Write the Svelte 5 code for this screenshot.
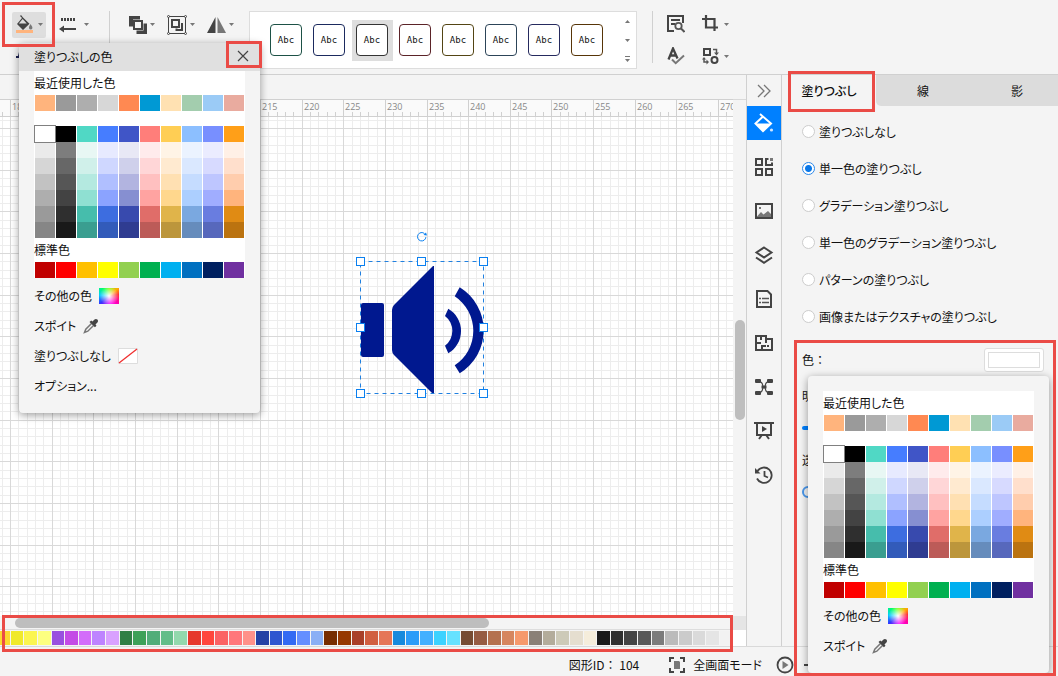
<script lang="ts">
  let fillType = $state('solid');
  let selectedStyle = $state(2);
  let brightness = $state(50);
  let opacity = $state(0);
  let canvasWidth = $state(733);
  let canvasHeight = $state(500);

  const recent = ['#ffb47d', '#9a9a9a', '#aeaeae', '#d7d7d7', '#ff8952', '#0099d4', '#ffe1b2', '#a3cdae', '#9bcbf6', '#e9ab9f'];

  const theme = [
    ['#ffffff', '#000000', '#50d8c5', '#467dff', '#4055c7', '#ff7e7a', '#ffce54', '#8cbfff', '#788fff', '#ff9f18'],
    ['#eaeaea', '#7d7d7d', '#e8f7f4', '#e7eaff', '#e8e8f5', '#ffebec', '#fff4e6', '#ebf3ff', '#ebecff', '#fff0e6'],
    ['#d6d6d6', '#676767', '#d0f0ea', '#cfd7ff', '#cfd0eb', '#ffd6d7', '#ffead0', '#dae8ff', '#d7daff', '#ffdfcc'],
    ['#c2c2c2', '#565656', '#b4e9e0', '#b0bfff', '#b2b4e0', '#ffc0c0', '#ffe0b2', '#c5dcff', '#bec6ff', '#ffcdad'],
    ['#aeaeae', '#434343', '#8fe0d2', '#8ba3ff', '#868fd1', '#ffa3a1', '#ffd78d', '#accfff', '#a0adff', '#ffb47d'],
    ['#9a9a9a', '#2f2f2f', '#46bdac', '#3d6de0', '#384aae', '#e06d69', '#e0b44a', '#7aa8e0', '#697de0', '#e08b14'],
    ['#868686', '#191919', '#3a9e90', '#325bba', '#2f3c91', '#bc5b58', '#bc963c', '#668cbc', '#5768bc', '#bb7310'],
  ];

  const standard = ['#c00000', '#ff0000', '#ffc000', '#ffff00', '#92d050', '#00b050', '#00b0f0', '#0070c0', '#002060', '#7030a0'];

  const strip = [
    '#fcd92f', '#f0e92c', '#fbf550', '#fdff80', '#9950df', '#c44ce6', '#d36dfa', '#be84ff', '#d9a1ff',
    '#307f45', '#3da158', '#51ad79', '#63bd89', '#93d8ad', '#e6382c', '#ff473c', '#fb6364', '#ff777b',
    '#ff9189', '#2542a5', '#2e56d0', '#336af3', '#648fff', '#8aaff5', '#772d00', '#963800', '#a93f28',
    '#d15f40', '#e57657', '#178add', '#2c9cf8', '#43b0ff', '#3dd2ff', '#66e2ff', '#774c33', '#965c43',
    '#b4714f', '#d6865f', '#f6996c', '#8a8077', '#b3ac9b', '#cdcab8', '#e5decf', '#f5eddb', '#1a1a1a',
    '#303030', '#444444', '#595959', '#7c7c7c', '#bbbbbb', '#cbcbcb', '#dadada', '#e5e5e5', '#f2f2f2',
  ];

  const styles = ['#1d5146', '#1b2a5e', '#333333', '#5b2328', '#544514', '#2c4458', '#252a5e', '#573508'];

  const fillTypes = [
    { id: 'none', label: '塗りつぶしなし' },
    { id: 'solid', label: '単一色の塗りつぶし' },
    { id: 'gradient', label: 'グラデーション塗りつぶし' },
    { id: 'solid-gradient', label: '単一色のグラデーション塗りつぶし' },
    { id: 'pattern', label: 'パターンの塗りつぶし' },
    { id: 'picture', label: '画像またはテクスチャの塗りつぶし' },
  ];

  // five small units make one large unit
  const unit = 8.33;

  function lines(start: number, size: number) {
    return Array.from({ length: Math.ceil((size - start) / unit) + 1 }, (_, i) => ({
      at: Math.round(start + (i - 1) * unit),
      major: (i - 1) % 5 === 0,
      value: 184 + i,
    }));
  }

  let vertical = $derived(lines(10, canvasWidth));
  let horizontal = $derived(lines(11, canvasHeight));

  const handles = [[360, 144], [421, 144], [483, 144], [360, 210], [483, 210], [360, 276], [421, 276], [483, 276]];
</script>

{#snippet caret()}
  <svg class="caret" width="5" height="3" viewBox="0 0 5 3" aria-hidden="true"><path d="M0 0h5L2.5 3z" fill="#777" /></svg>
{/snippet}

{#snippet swatches(colors: string[])}
  {#each colors as color}
    <button class={['swatch', color === '#ffffff' && 'current']} style:background={color} aria-label={color}></button>
  {/each}
{/snippet}

{#snippet picker()}
  <div class="picker">
    <h3>最近使用した色</h3>
    <div class="colors">{@render swatches(recent)}</div>
    <div class="colors theme">{@render swatches(theme.flat())}</div>
    <h3>標準色</h3>
    <div class="colors">{@render swatches(standard)}</div>
  </div>
  <button class="option">その他の色 <span class="spectrum"></span></button>
  <button class="option">
    スポイト
    <svg width="16" height="16" viewBox="0 0 16 16" aria-hidden="true">
      <path d="M8.500 5.500 2.800 11.200 1.500 14.500 4.800 13.200l5.700-5.700" fill="none" stroke="#777" stroke-width="1.500" />
      <path d="m6.500 4 1.700-1.500 1.300 1L11.200 1.700c1-1 2.300-1 3.200-.2.900 1 .8 2.300-.2 3.200l-1.700 1.800 1 1.200-1.600 1.600z" fill="#444" />
    </svg>
  </button>
{/snippet}

<div class="app">
  <header class="toolbar">
    <div class="group">
      <div class="row">
        <div class="dropdown">
          <button class="tool open" aria-label="塗りつぶしの色" aria-expanded="true">
            <svg width="19" height="19" viewBox="0 0 19 19" aria-hidden="true">
              <path d="M6 0 5 1l2 2-5 6 6 6 6.500-6.200L8 2.500z" fill="#444" />
              <path d="M7.700 4 3.800 8.600h7.900z" fill="#dedede" />
              <path d="M15.500 9c1.400 2 2.200 3.300 1.800 4.600-.5 1.300-2.700 1.300-3.200 0-.4-1.300.2-2.600 1.400-4.600z" fill="#777" />
              <path d="M1 15h17v3H1z" fill="#ffb47d" />
            </svg>
            {@render caret()}
            <span class="callout around-tool"></span>
          </button>
          <div class="menu">
            <div class="menu-title">
              <h2>塗りつぶしの色</h2>
              <button class="close" aria-label="閉じる">
                <svg width="12" height="12" viewBox="0 0 12 12" aria-hidden="true"><path d="m1 1 10 10M11 1 1 11" stroke="#444" stroke-width="1.200" /></svg>
                <span class="callout around-close"></span>
              </button>
            </div>
            <div class="menu-body">
              {@render picker()}
              <button class="option">
                塗りつぶしなし
                <svg width="20" height="16" viewBox="0 0 20 16" aria-hidden="true">
                  <path d="M.5.500h19v15H.500z" fill="#fff" stroke="#ddd" />
                  <path d="M1 15 19 1" stroke="#f03030" stroke-width="1.300" />
                </svg>
              </button>
              <button class="option">オプション...</button>
            </div>
          </div>
        </div>
        <button class="tool line" aria-label="線のスタイル">
          <svg width="18" height="16" viewBox="0 0 18 16" aria-hidden="true">
            <path d="M2 2.500h15" stroke="#444" stroke-width="3" stroke-dasharray="2 1" />
            <path d="M3 12h14" stroke="#444" stroke-width="2" />
            <path d="M0 12 5 8.500v7z" fill="#444" />
          </svg>
          {@render caret()}
        </button>
      </div>
      <div class="row">
        <button class="tool font-color" aria-label="文字の色">
          <svg width="8" height="8" viewBox="0 0 8 8" aria-hidden="true"><path d="M3 0h5v3H5v3H0V4h2z" fill="#1b2050" /></svg>
        </button>
      </div>
    </div>
    <span class="separator"></span>
    <div class="row arrange">
      <button class="tool" aria-label="前面へ移動">
        <svg width="18" height="18" viewBox="0 0 18 18" aria-hidden="true">
          <path d="M0 0h11v3.500H4v7H0zM14.500 7.500H18V18H7.500v-3.500h7z" fill="#444" />
          <path d="M5 5h8v8H5z" fill="#f4f4f4" stroke="#444" stroke-width="2" />
        </svg>
        {@render caret()}
      </button>
      <button class="tool" aria-label="グループ化">
        <svg width="20" height="20" viewBox="0 0 20 20" aria-hidden="true">
          <path d="M1.500 1.500h17v17h-17z" fill="none" stroke="#444" />
          <g fill="#f4f4f4" stroke="#444"><circle cx="1.500" cy="1.500" r="1" /><circle cx="18.500" cy="1.500" r="1" /><circle cx="1.500" cy="18.500" r="1" /><circle cx="18.500" cy="18.500" r="1" /></g>
          <path d="M5 5h7v7H5zM15 8v7H9.500v-1.500" fill="none" stroke="#444" stroke-width="2" />
        </svg>
        {@render caret()}
      </button>
      <button class="tool" aria-label="反転">
        <svg width="19" height="18" viewBox="0 0 19 18" aria-hidden="true"><path d="M8.500 1v16H0z" fill="#444" /><path d="M10.500 1v16H19z" fill="#777" /></svg>
        {@render caret()}
      </button>
    </div>
    <div class="gallery">
      {#each styles as color, i}
        <button class={['preset', selectedStyle === i && 'selected']} onclick={() => (selectedStyle = i)}>
          <span style:border-color={color}>Abc</span>
        </button>
      {/each}
      <div class="gallery-scroll">
        <button aria-label="上へ"><svg width="5" height="3" viewBox="0 0 5 3"><path d="M0 3h5L2.500 0z" fill="#777" /></svg></button>
        <button aria-label="下へ">{@render caret()}</button>
        <button aria-label="すべて表示"><svg width="5" height="6" viewBox="0 0 5 6"><path d="M0 .5h5" stroke="#777" /><path d="M0 3h5L2.500 6z" fill="#777" /></svg></button>
      </div>
    </div>
    <span class="separator"></span>
    <div class="tools">
      <button class="tool" aria-label="検索">
        <svg width="18" height="18" viewBox="0 0 18 18" aria-hidden="true">
          <path d="M7 16H1V1h15v7M4 5h9M4 9h4" fill="none" stroke="#444" stroke-width="2" />
          <circle cx="11.500" cy="11" r="3.200" fill="none" stroke="#555" stroke-width="1.800" /><path d="m14 13.500 3.500 3.500" stroke="#555" stroke-width="2" />
        </svg>
      </button>
      <button class="tool" aria-label="トリミング">
        <svg width="18" height="18" viewBox="0 0 18 18" aria-hidden="true"><path d="M4 0v12.500h12M0 4h12.500v12" fill="none" stroke="#444" stroke-width="2.200" /></svg>
        {@render caret()}
      </button>
      <button class="tool" aria-label="スペルチェック">
        <svg width="18" height="18" viewBox="0 0 18 18" aria-hidden="true">
          <path d="M1.500 12.500 6 1.500l4.500 10M3.500 8.500h5" fill="none" stroke="#444" stroke-width="2.300" />
          <path d="m5 12.500 3.700 3.700L17 8.500" fill="none" stroke="#777" stroke-width="2" />
        </svg>
      </button>
      <button class="tool" aria-label="図形の置換">
        <svg width="18" height="18" viewBox="0 0 18 18" aria-hidden="true">
          <path d="M2 2h6v6H2z" fill="none" stroke="#444" stroke-width="2" />
          <circle cx="12.500" cy="13" r="3" fill="none" stroke="#444" stroke-width="2" />
          <path d="M11 2.500h3.500V6M2 11.500V15h3.500" fill="none" stroke="#555" stroke-width="1.500" />
          <path d="M12 5.500h5l-2.500 3zM4.500 12.500v5l2.500-2.500zM0 12.500h4L2 10z" fill="#555" />
        </svg>
        {@render caret()}
      </button>
    </div>
  </header>

  <main>
    <section class="workspace">
      <div class="pages"></div>
      <svg class="ruler" aria-hidden="true">
        {#each vertical as tick}
          <rect x={tick.at} y={tick.major ? 0 : 12} width="1" height="18" fill="#d0d0d0" />
          {#if tick.major}<text x={tick.at + 2} y="10">{tick.value}</text>{/if}
        {/each}
      </svg>
      <div class="ruler-end"></div>
      <div class="canvas" bind:clientWidth={canvasWidth} bind:clientHeight={canvasHeight}>
        <svg width="100%" height="100%">
          {#each vertical.filter((l) => !l.major) as line}<rect x={line.at} y="0" width="1" height="100%" fill="#ededed" />{/each}
          {#each horizontal.filter((l) => !l.major) as line}<rect x="0" y={line.at} width="100%" height="1" fill="#ededed" />{/each}
          {#each vertical.filter((l) => l.major) as line}<rect x={line.at} y="0" width="1" height="100%" fill="#d9d9d9" />{/each}
          {#each horizontal.filter((l) => l.major) as line}<rect x="0" y={line.at} width="100%" height="1" fill="#d9d9d9" />{/each}

          <g fill="#00188f">
            <rect x="361" y="186" width="23" height="54" rx="2" />
            <path d="M433 149h1v128h-1L394 238q-2-2-2-5v-40q0-3 2-5z" />
            <path d="M448.300 191.700a25.900 25.900 0 0 1 0 44.600L445 228.700a18.700 18.700 0 0 0 0-29.700z" />
            <path d="M459.700 170.300a50.500 50.500 0 0 1 0 86L454.700 248.300a41.300 41.300 0 0 0 0-69z" />
          </g>
          <g fill="none" stroke="#0a80f0">
            <rect x="360.500" y="144.500" width="123" height="132" stroke="#2080e0" stroke-dasharray="4 4" />
            <path d="M424.500 116.600a4.200 4.200 0 1 0 1.400 3.500" />
            <path d="m423.500 118 3.500.5-1-3z" fill="#0a80f0" stroke="none" />
            {#each handles as [x, y]}<rect x={x - 3.5} y={y - 3.5} width="8" height="8" fill="#fff" />{/each}
          </g>
        </svg>
      </div>
      <div class="scroll-y"><span></span></div>
      <div class="scroll-x"><span></span></div>
      <div class="corner"></div>
      <div class="strip">
        {#each strip as color}<button style:background={color} aria-label={color}></button>{/each}
      </div>
      <div class="strip-end"></div>
      <span class="callout around-strip"></span>
    </section>

    <nav class="rail">
      <button class="collapse" aria-label="折りたたむ"><svg width="14" height="14" viewBox="0 0 14 14"><path d="m1 1 6 6-6 6M7 1l6 6-6 6" fill="none" stroke="#777" stroke-width="1.300" /></svg></button>
      <button class="active" aria-label="塗りつぶし">
        <svg width="20" height="20" viewBox="0 0 20 20"><path d="m6 1 11 9.500-8 7.500-7.500-7.500L9 3.500" fill="none" stroke="#fff" stroke-width="2" /><path d="M2 10.500h14.500L9 18z" fill="#fff" /><circle cx="17.500" cy="17" r="1.600" fill="#cfe5ff" /></svg>
      </button>
      <button aria-label="図形"><svg width="18" height="18" viewBox="0 0 18 18"><path d="M1 1h6v6H1zM1 11h6v6H1zM11 11h6v6h-6zM13.500 1H11v6h6V4.500" fill="none" stroke="#444" stroke-width="2" /><path d="M15 0h3v3h-3z" fill="#777" /></svg></button>
      <button aria-label="画像"><svg width="18" height="16" viewBox="0 0 18 16"><path d="M1 1h16v14H1z" fill="none" stroke="#444" stroke-width="2" /><path d="M2 13.500 6 9l2.500 2.500L13 8l3 3v3H2z" fill="#777" /><path d="M4 4h2v2H4z" fill="#777" /></svg></button>
      <button aria-label="レイヤー"><svg width="20" height="18" viewBox="0 0 20 18"><path d="m10 1.500 7.500 5L10 11.500l-7.500-5z" fill="none" stroke="#444" stroke-width="2" /><path d="m2 11.500 8 5.300 8-5.300" fill="none" stroke="#444" stroke-width="2" /></svg></button>
      <button aria-label="ページ"><svg width="18" height="18" viewBox="0 0 18 18"><path d="M2 1h10.500L16 4.500V17H2z" fill="none" stroke="#444" stroke-width="2" /><path d="M7 8.500h7M7 12.500h7M4 8.500h2M4 12.500h2" stroke="#555" stroke-width="1.500" /></svg></button>
      <button aria-label="間取り"><svg width="18" height="16" viewBox="0 0 18 16"><path d="M1 1h10v3h6v11H1zM1 8h5M7 15v-4h4M11 4v4M6 1v4M12 11h2" fill="none" stroke="#444" stroke-width="2" /></svg></button>
      <button aria-label="マインドマップ"><svg width="18" height="16" viewBox="0 0 18 16"><path d="M4 2.500q3 0 3.500 3t1.500 2.500q1 .5 1.500-2.500t3.500-3M4 13.500q3 0 3.500-3T9 8q1-.5 1.500 2.500t3.500 3" fill="none" stroke="#444" stroke-width="1.200" /><path d="M6.500 6.500h5v3h-5z" fill="#444" /><rect width="6" height="4" rx="1" fill="#444" /><rect x="12" width="6" height="4" rx="1" fill="#444" /><rect y="12" width="6" height="4" rx="1" fill="#444" /><rect x="12" y="12" width="6" height="4" rx="1" fill="#444" /></svg></button>
      <button aria-label="プレゼンテーション"><svg width="20" height="18" viewBox="0 0 20 18"><path d="M0 1h20M3 1v12h14V1M7.500 13.500 5 17M12.500 13.500 15 17" fill="none" stroke="#444" stroke-width="2" /><path d="M8 4v6l5-3z" fill="#444" /></svg></button>
      <button aria-label="履歴"><svg width="18" height="18" viewBox="0 0 18 18"><path d="M2.500 5A7.700 7.700 0 1 1 2 12.500M9.500 5v5l3.500 1.500" fill="none" stroke="#444" stroke-width="1.800" /><path d="M0 2v5.500h5.500z" fill="#444" /></svg></button>
    </nav>

    <aside class="panel">
      <div class="tabs" role="tablist">
        <button class="tab current" role="tab" aria-selected="true">塗りつぶし<span class="callout around-tab"></span></button>
        <div class="other-tabs">
          <button class="tab" role="tab" aria-selected="false">線</button>
          <button class="tab" role="tab" aria-selected="false">影</button>
        </div>
      </div>
      <div class="fill-types">
        {#each fillTypes as type}
          <label><input type="radio" name="fill" value={type.id} bind:group={fillType} />{type.label}</label>
        {/each}
      </div>
      <div class="color-section">
        <span class="callout around-color"></span>
        <div class="color-row">
          <span class="full-width">色：</span>
          <button class="color-button" aria-label="色"><span></span></button>
        </div>
        <label class="setting" for="brightness">明度</label>
        <div class="setting"><input id="brightness" class="filled" type="range" bind:value={brightness} /></div>
        <label class="setting" for="opacity">透明度</label>
        <div class="setting"><input id="opacity" type="range" bind:value={opacity} /></div>
        <div class="popup">{@render picker()}</div>
      </div>
    </aside>
  </main>

  <footer>
    <span class="shape-id full-width">図形ID： 104</span>
    <button class="fullscreen">
      <svg width="16" height="16" viewBox="0 0 16 16" aria-hidden="true"><path d="M1 5V1h4M11 1h4v4M15 11v4h-4M5 15H1v-4" fill="none" stroke="#444" stroke-width="2" /><path d="M5 4h5l1 1v7H5z" fill="#777" /></svg>
      全画面モード
    </button>
    <button class="play" aria-label="再生"><svg width="18" height="18" viewBox="0 0 18 18"><circle cx="9" cy="9" r="7.500" fill="none" stroke="#444" stroke-width="1.800" /><path d="M6.500 5v8l6-4z" fill="#777" /></svg></button>
    <div class="zoom">
      <button aria-label="縮小"><svg width="8" height="2" viewBox="0 0 8 2"><path d="M0 0h8v2H0z" fill="#444" /></svg></button>
    </div>
  </footer>
</div>

<style>
  :global(body) {
    margin: 0;
  }

  .app {
    display: flex;
    flex-direction: column;
    height: 100vh;
    overflow: hidden;
    background: #f4f4f4;
    color: #111;
    font: 12px/16px "Noto Sans CJK JP", sans-serif;
    font-feature-settings: "palt";
  }

  .app :global(*) {
    box-sizing: border-box;
  }

  button {
    display: flex;
    align-items: center;
    justify-content: center;
    margin: 0;
    padding: 0;
    border: 0;
    background: none;
    color: inherit;
    font: inherit;
    font-feature-settings: inherit;
  }

  svg {
    display: block;
    flex: none;
  }

  h2, h3 {
    margin: 0;
    font-size: 12px;
    font-weight: 400;
  }

  .full-width {
    font-feature-settings: normal;
  }

  .callout {
    position: absolute;
    z-index: 20;
    border: 3px solid #ea4b46;
    pointer-events: none;
  }

  .around-tool { inset: -10px -9px -9px -10px; }
  .around-close { inset: -3px -4px 0 -2px; }
  .around-tab { inset: -4px 1px -6px 6px; }
  .around-strip { inset: auto 13px -6px 2px; height: 37px; }
  .around-color { inset: 0 0 auto; height: 336px; }

  .toolbar {
    display: flex;
    align-items: flex-start;
    flex: none;
    height: 75px;
    padding: 11px 0 0 12px;
    border-bottom: 1px solid #d0d0d0;
  }

  .row {
    display: flex;
    height: 27px;
    align-items: center;
  }

  .group {
    width: 97px;
  }

  .dropdown {
    position: relative;
  }

  .tool {
    position: relative;
    gap: 4px;
    height: 26px;
  }

  .open {
    width: 34px;
    border-radius: 2px;
    background: #dedede;
  }

  .line {
    gap: 7px;
    margin-left: 13px;
  }

  .font-color {
    margin: 8px 0 0 4px;
  }

  .separator {
    width: 1px;
    height: 52px;
    background: #d0d0d0;
  }

  .arrange {
    gap: 12px;
    width: 139px;
    padding-left: 19px;
  }

  .arrange .tool {
    gap: 3px;
  }

  .gallery {
    display: flex;
    align-items: center;
    gap: 2px;
    width: 388px;
    height: 58px;
    margin-right: 15px;
    padding-left: 16px;
    border: 1px solid #ddd;
    background: #fff;
  }

  .preset {
    justify-content: flex-start;
    height: 41px;
    width: 41px;
    padding-left: 4px;
  }

  .preset.selected {
    background: #dedede;
  }

  .preset span {
    width: 32px;
    height: 32px;
    border: 1px solid;
    border-radius: 4px;
    background: #fff;
    font: 9px/30px "DejaVu Sans Mono", monospace;
  }

  .gallery-scroll {
    display: flex;
    flex-direction: column;
    width: 18px;
    margin-left: auto;
  }

  .gallery-scroll button {
    height: 19px;
  }

  .tools {
    display: grid;
    grid-template-columns: 35px 24px;
    grid-auto-rows: 26px;
    gap: 6px 0;
    margin-left: 14px;
  }

  .tools .tool {
    justify-content: flex-start;
  }

  .menu, .popup {
    position: absolute;
    z-index: 10;
    width: 241px;
    border-radius: 4px;
    background: #f4f4f4;
    box-shadow: 0 2px 8px rgb(0 0 0 / 40%);
  }

  .menu {
    top: 31px;
    left: 7px;
  }

  .menu-title {
    display: flex;
    justify-content: space-between;
    height: 28px;
    padding: 1px 2px 0 15px;
    background: #e0e0e0;
  }

  .menu-title h2 {
    line-height: 26px;
  }

  .close {
    position: relative;
    width: 30px;
    height: 24px;
  }

  .menu-body {
    padding: 0 15px 12px;
  }

  .picker {
    width: 211px;
    background: #fff;
  }

  .picker h3 {
    line-height: 24px;
  }

  .colors {
    display: grid;
    grid-template-columns: repeat(10, 20px);
    grid-auto-rows: 16px;
    column-gap: 1px;
    padding: 0 1px;
  }

  .theme {
    padding-top: 15px;
  }

  .swatch.current {
    position: relative;
    outline: 1px solid #808080;
  }

  .option {
    gap: 7px;
    height: 30px;
  }

  .picker + .option {
    margin-top: 3px;
  }

  .spectrum {
    width: 20px;
    height: 16px;
    background:
      radial-gradient(circle, #fff, transparent 75%),
      conic-gradient(from 50deg, #fa0, #f33 30deg, #f0a 75deg, #f0f 120deg, #33f 180deg, #0cf 225deg, #0f6 270deg, #7f0 310deg, #fa0);
  }

  main {
    display: flex;
    flex: 1;
    min-height: 0;
  }

  .workspace {
    position: relative;
    display: grid;
    flex: 1;
    min-width: 0;
    grid-template-columns: minmax(0, 1fr) 13px;
    grid-template-rows: 24px 18px minmax(0, 1fr) 14px 16px;
  }

  .pages {
    grid-column: 1 / -1;
  }

  .ruler {
    width: 100%;
    height: 18px;
    border-top: 1px solid #d0d0d0;
    border-bottom: 1px solid #d0d0d0;
    background: #fafafa;
  }

  .ruler text {
    fill: #888;
    font: 9px "Open Sans", sans-serif;
  }

  .ruler-end {
    border-top: 1px solid #d9d9d9;
  }

  .canvas {
    background: #fff;
  }

  .scroll-y {
    padding: 203px 1px 0 2px;
  }

  .scroll-y span {
    display: block;
    height: 100px;
    border-radius: 5px;
    background: #bebebe;
  }

  .scroll-x {
    padding: 2px 0 0 15px;
    border-bottom: 1px solid #ddd;
  }

  .scroll-x span {
    display: block;
    width: 66%;
    height: 10px;
    border-radius: 5px;
    background: #bebebe;
  }

  .corner {
    background: #e5e5e5;
  }

  .strip {
    display: flex;
    gap: 1px;
    overflow: hidden;
    padding: 1px 0;
  }

  .strip button {
    flex: 1;
  }

  .strip button:first-child {
    margin-left: -3px;
  }

  .strip-end {
    background: #fff;
  }

  .rail {
    display: flex;
    flex-direction: column;
    flex: none;
    width: 36px;
    border: solid #d0d0d0;
    border-width: 0 1px;
  }

  .rail button {
    height: 44px;
  }

  .rail .collapse {
    height: 31px;
  }

  .rail .active {
    height: 34px;
    margin-bottom: 5px;
    background: #0080ff;
  }

  .panel {
    flex: none;
    width: 276px;
  }

  .tabs {
    display: flex;
    height: 31px;
  }

  .other-tabs {
    display: flex;
    flex: 1;
    overflow: hidden;
    border-bottom-left-radius: 5px;
    background: #dcdcdc;
  }

  .tab {
    flex: 0 0 94px;
  }

  .tab.current {
    position: relative;
    font-weight: 500;
  }

  .fill-types {
    padding: 7px 0 0 20px;
  }

  .fill-types label {
    display: flex;
    align-items: center;
    gap: 4px;
    height: 37px;
  }

  input[type="radio"] {
    appearance: none;
    width: 13px;
    height: 13px;
    margin: 0;
    border: 1px solid #ccc;
    border-radius: 50%;
    background: #fff;
  }

  input[type="radio"]:checked {
    border-color: #2a88ea;
    background: radial-gradient(circle, #0a78e8 3px, #fff 4px);
  }

  .color-section {
    position: relative;
    margin: 5px 2px 0 12px;
    padding: 0 12px 0 8px;
  }

  .color-row {
    display: flex;
    align-items: center;
    justify-content: space-between;
    height: 40px;
  }

  .color-button {
    width: 60px;
    height: 24px;
    padding: 3px;
    border: 1px solid #ddd;
    border-radius: 3px;
    background: #fff;
  }

  .color-button span {
    width: 100%;
    height: 100%;
    border: 1px solid #ddd;
  }

  .setting {
    display: flex;
    align-items: center;
    height: 32px;
  }

  input[type="range"] {
    appearance: none;
    width: 100%;
    height: 4px;
    margin: 0;
    border-radius: 2px;
    background: #ccc;
  }

  input[type="range"].filled {
    background: linear-gradient(90deg, #0080ff 50%, #ccc 50%);
  }

  input[type="range"]::-webkit-slider-thumb {
    appearance: none;
    width: 12px;
    height: 12px;
    border: 2px solid #4a98ec;
    border-radius: 50%;
    background: #f4f4f4;
  }

  .popup {
    top: 36px;
    left: 14px;
    padding: 15px 15px 12px;
  }

  footer {
    display: flex;
    align-items: center;
    justify-content: flex-end;
    flex: none;
    height: 30px;
    padding-top: 6px;
    border-top: 1px solid #d9d9d9;
  }

  .shape-id {
    margin-right: 30px;
  }

  .fullscreen {
    gap: 8px;
    margin-right: 14px;
  }

  .zoom {
    width: 264px;
    padding-left: 10px;
  }
</style>
